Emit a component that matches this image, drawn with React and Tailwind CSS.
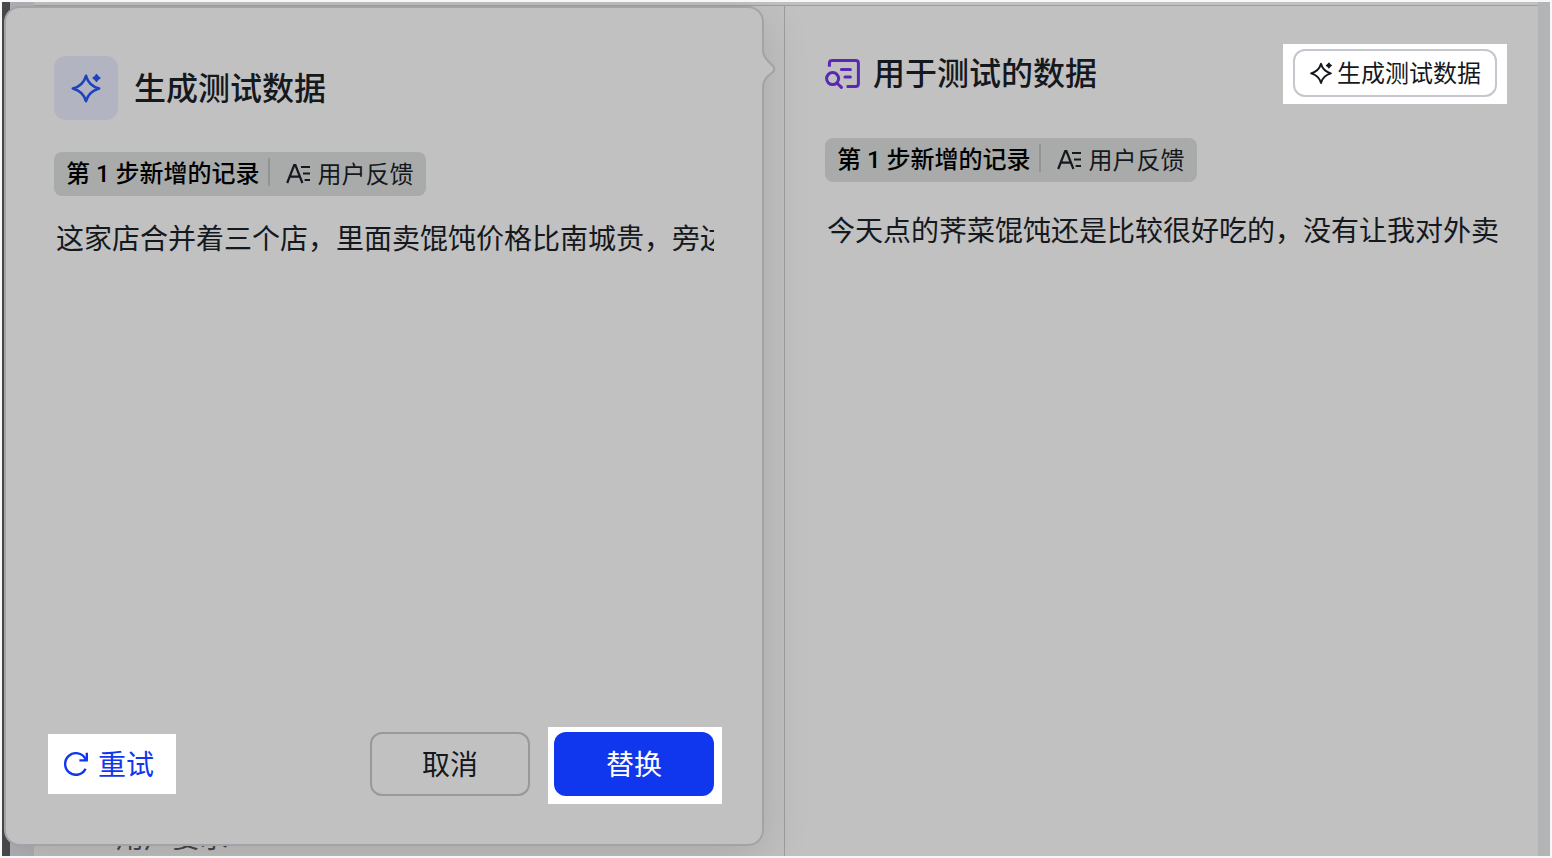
import React from "react";

const RECORD_LABEL = "第 1 步新增的记录";
const FIELD_LABEL = "用户反馈";

// --- Icons ---
function SparkleIcon({ className }) {
  return (
    <svg viewBox="-1 0 32 32" fill="none" className={className} aria-hidden="true">
      <path
        d="M15 3.8C16.6 9.6 20.2 14.4 28.2 16.5C20.2 18.6 16.6 23.4 15 29.2C13.4 23.4 9.8 18.6 1.8 16.5C9.8 14.4 13.4 9.6 15 3.8Z"
        stroke="currentColor"
        strokeWidth="2.6"
        strokeLinejoin="round"
      />
      <path
        d="M25.5 2.6C26.3 4.4 27.1 5.2 28.9 6C27.1 6.8 26.3 7.6 25.5 9.4C24.7 7.6 23.9 6.8 22.1 6C23.9 5.2 24.7 4.4 25.5 2.6Z"
        fill="currentColor"
        stroke="currentColor"
        strokeWidth="1.4"
        strokeLinejoin="round"
      />
    </svg>
  );
}

function SearchDataIcon({ className }) {
  return (
    <svg
      viewBox="0 -1 36 32"
      fill="none"
      stroke="currentColor"
      strokeWidth="3"
      strokeLinecap="round"
      strokeLinejoin="round"
      className={className}
      aria-hidden="true"
    >
      <path
        d="M4.4 8.8V5.2C4.4 3.4 5.6 2.4 7.2 2.4H30.6C32.4 2.4 33.4 3.6 33.4 5.2V25.4C33.4 27.2 32.4 28.4 30.6 28.4H21.6"
        strokeLinecap="butt"
      />
      <path d="M16.4 11.6H25.4M20 19H25.4" />
      <circle cx="7.6" cy="20.6" r="6" />
      <path d="M12.2 25.2L16.4 29.4" />
    </svg>
  );
}

function TextFieldIcon({ className }) {
  return (
    <svg
      viewBox="0 0 26 24"
      fill="none"
      stroke="currentColor"
      strokeWidth="2.2"
      className={className}
      aria-hidden="true"
    >
      <path d="M1.2 21L8.2 3H9.4L16.4 21M4 14.6H13.6" />
      <path d="M15 5H24M17 11.5H24M18.6 18H24" strokeWidth="2" />
    </svg>
  );
}

function RetryIcon({ className }) {
  return (
    <svg
      viewBox="0 0 24 24"
      fill="none"
      stroke="currentColor"
      strokeWidth="2.4"
      strokeLinejoin="round"
      className={className}
      aria-hidden="true"
    >
      <path d="M21.6 16.8A10.8 10.8 0 1 1 21.4 6.8L22.4 8.2" />
      <path d="M22.8 0.8V8.4H15.4" />
    </svg>
  );
}

// --- Shared pieces ---
function FieldChip() {
  return (
    <div className="flex h-11 w-fit items-center rounded-lg bg-[#a9abaa] px-3 text-2xl whitespace-nowrap">
      <span className="font-['Roboto','Noto_Sans_CJK_SC',sans-serif] font-medium text-black">
        {RECORD_LABEL}
      </span>
      <span className="mx-2 mb-1 h-7 w-0.5 bg-[#929393]" />
      <TextFieldIcon className="ml-2 h-6 w-[26px]" />
      <span className="ml-1.5">{FIELD_LABEL}</span>
    </div>
  );
}

function PageBackdrop() {
  return (
    <div
      aria-hidden="true"
      className="col-start-1 row-start-1 flex overflow-hidden"
    >
      <div className="w-2 bg-[#4a4a4a]" />
      <div className="w-6 bg-[#afb1b6]" />
      <div className="mt-[3px] flex flex-1 items-end border-t border-r border-[#9c9d9f] pl-[82px]">
        <span className="-mb-px text-[28px] leading-10 text-[#45474c]">
          用户要求
        </span>
      </div>
    </div>
  );
}

function GeneratePopover() {
  return (
    <section
      role="dialog"
      aria-labelledby="generate-title"
      className="relative z-10 col-start-1 row-start-1 mt-1 mr-[21px] mb-2.5 ml-0.5 flex min-w-0 flex-col rounded-2xl border-2 border-[#a2a2a7] bg-[#c1c1c1] p-12 shadow-[0_12px_48px_rgba(0,0,0,0.13)]"
    >
      <svg
        viewBox="0 0 14 40"
        fill="none"
        className="absolute top-10 -right-[14px] h-10 w-3.5"
        aria-hidden="true"
      >
        <path
          d="M1 2C1 7 3 10 6 13L11 18Q13.6 21 11 24L6 28C3 31 1 34 1 39"
          fill="#c1c1c1"
        />
        <path d="M0 2H2V39H0Z" fill="#c1c1c1" />
        <path
          d="M1 2C1 7 3 10 6 13L11 18Q13.6 21 11 24L6 28C3 31 1 34 1 39"
          stroke="#a2a2a7"
          strokeWidth="2"
        />
      </svg>

      <header className="flex items-center gap-4">
        <div className="flex size-16 items-center justify-center rounded-xl bg-[#b2b5c1]">
          <SparkleIcon className="size-8 text-[#1f42bd]" />
        </div>
        <h2 id="generate-title" className="text-[32px] leading-10 font-medium">
          生成测试数据
        </h2>
      </header>

      <div className="mt-8">
        <FieldChip />
      </div>
      <p className="mt-[22px] overflow-hidden pl-0.5 text-[28px] leading-10 whitespace-nowrap">
        这家店合并着三个店，里面卖馄饨价格比南城贵，旁边
      </p>

      <footer className="mt-auto flex items-center text-[28px] leading-10">
        <button
          type="button"
          className="-ml-1.5 flex h-[60px] w-32 items-center gap-2.5 bg-white pl-4 text-[#1137ee]"
        >
          <RetryIcon className="size-6" />
          重试
        </button>
        <button
          type="button"
          className="ml-auto h-16 w-40 rounded-xl border-2 border-[#98989d]"
        >
          取消
        </button>
        <div className="-mt-[5px] -mr-2 -mb-2 ml-[18px] bg-white pt-[5px] pr-2 pb-2 pl-1.5">
          <button
            type="button"
            className="block h-16 w-40 rounded-xl bg-[#1137ee] text-white"
          >
            替换
          </button>
        </div>
      </footer>
    </section>
  );
}

function TestDataPanel() {
  return (
    <section className="min-w-0 overflow-hidden border-t border-[#9c9d9f] px-10 pt-[43px]">
      <header className="flex h-12 items-center">
        <SearchDataIcon className="h-8 w-9 text-[#5a28b4]" />
        <h2 className="ml-3 text-[32px] leading-10 font-medium whitespace-nowrap">
          用于测试的数据
        </h2>
        <div className="-mr-[9px] -mb-0.5 ml-auto bg-white px-2.5 pt-[5px] pb-[7px]">
          <button
            type="button"
            className="flex h-12 items-center gap-1 rounded-xl border-2 border-[#c4c7ce] px-3.5 text-2xl whitespace-nowrap"
          >
            <SparkleIcon className="size-6" />
            生成测试数据
          </button>
        </div>
      </header>

      <div className="mt-[41px]">
        <FieldChip />
      </div>
      <p className="mt-7 -mr-1 overflow-hidden pl-0.5 text-[28px] leading-10 whitespace-nowrap">
        今天点的荠菜馄饨还是比较很好吃的，没有让我对外卖
      </p>
    </section>
  );
}

function App() {
  return (
    <div className="flex min-h-screen bg-[#f6f7f6] p-0.5 font-['Open_Sans','Noto_Sans_CJK_SC',sans-serif] text-[#15181c]">
      <main className="flex flex-1 overflow-hidden bg-[#c1c1c1]">
        <div className="grid min-w-0 flex-1 grid-cols-[783fr_753fr]">
          <div className="grid min-w-0 grid-cols-1">
            <PageBackdrop />
            <GeneratePopover />
          </div>
          <div className="flex min-w-0 flex-col pt-[3px]">
            <TestDataPanel />
          </div>
        </div>
        <div className="w-3 bg-[#b3b4b6]" />
      </main>
    </div>
  );
}

export default App;
